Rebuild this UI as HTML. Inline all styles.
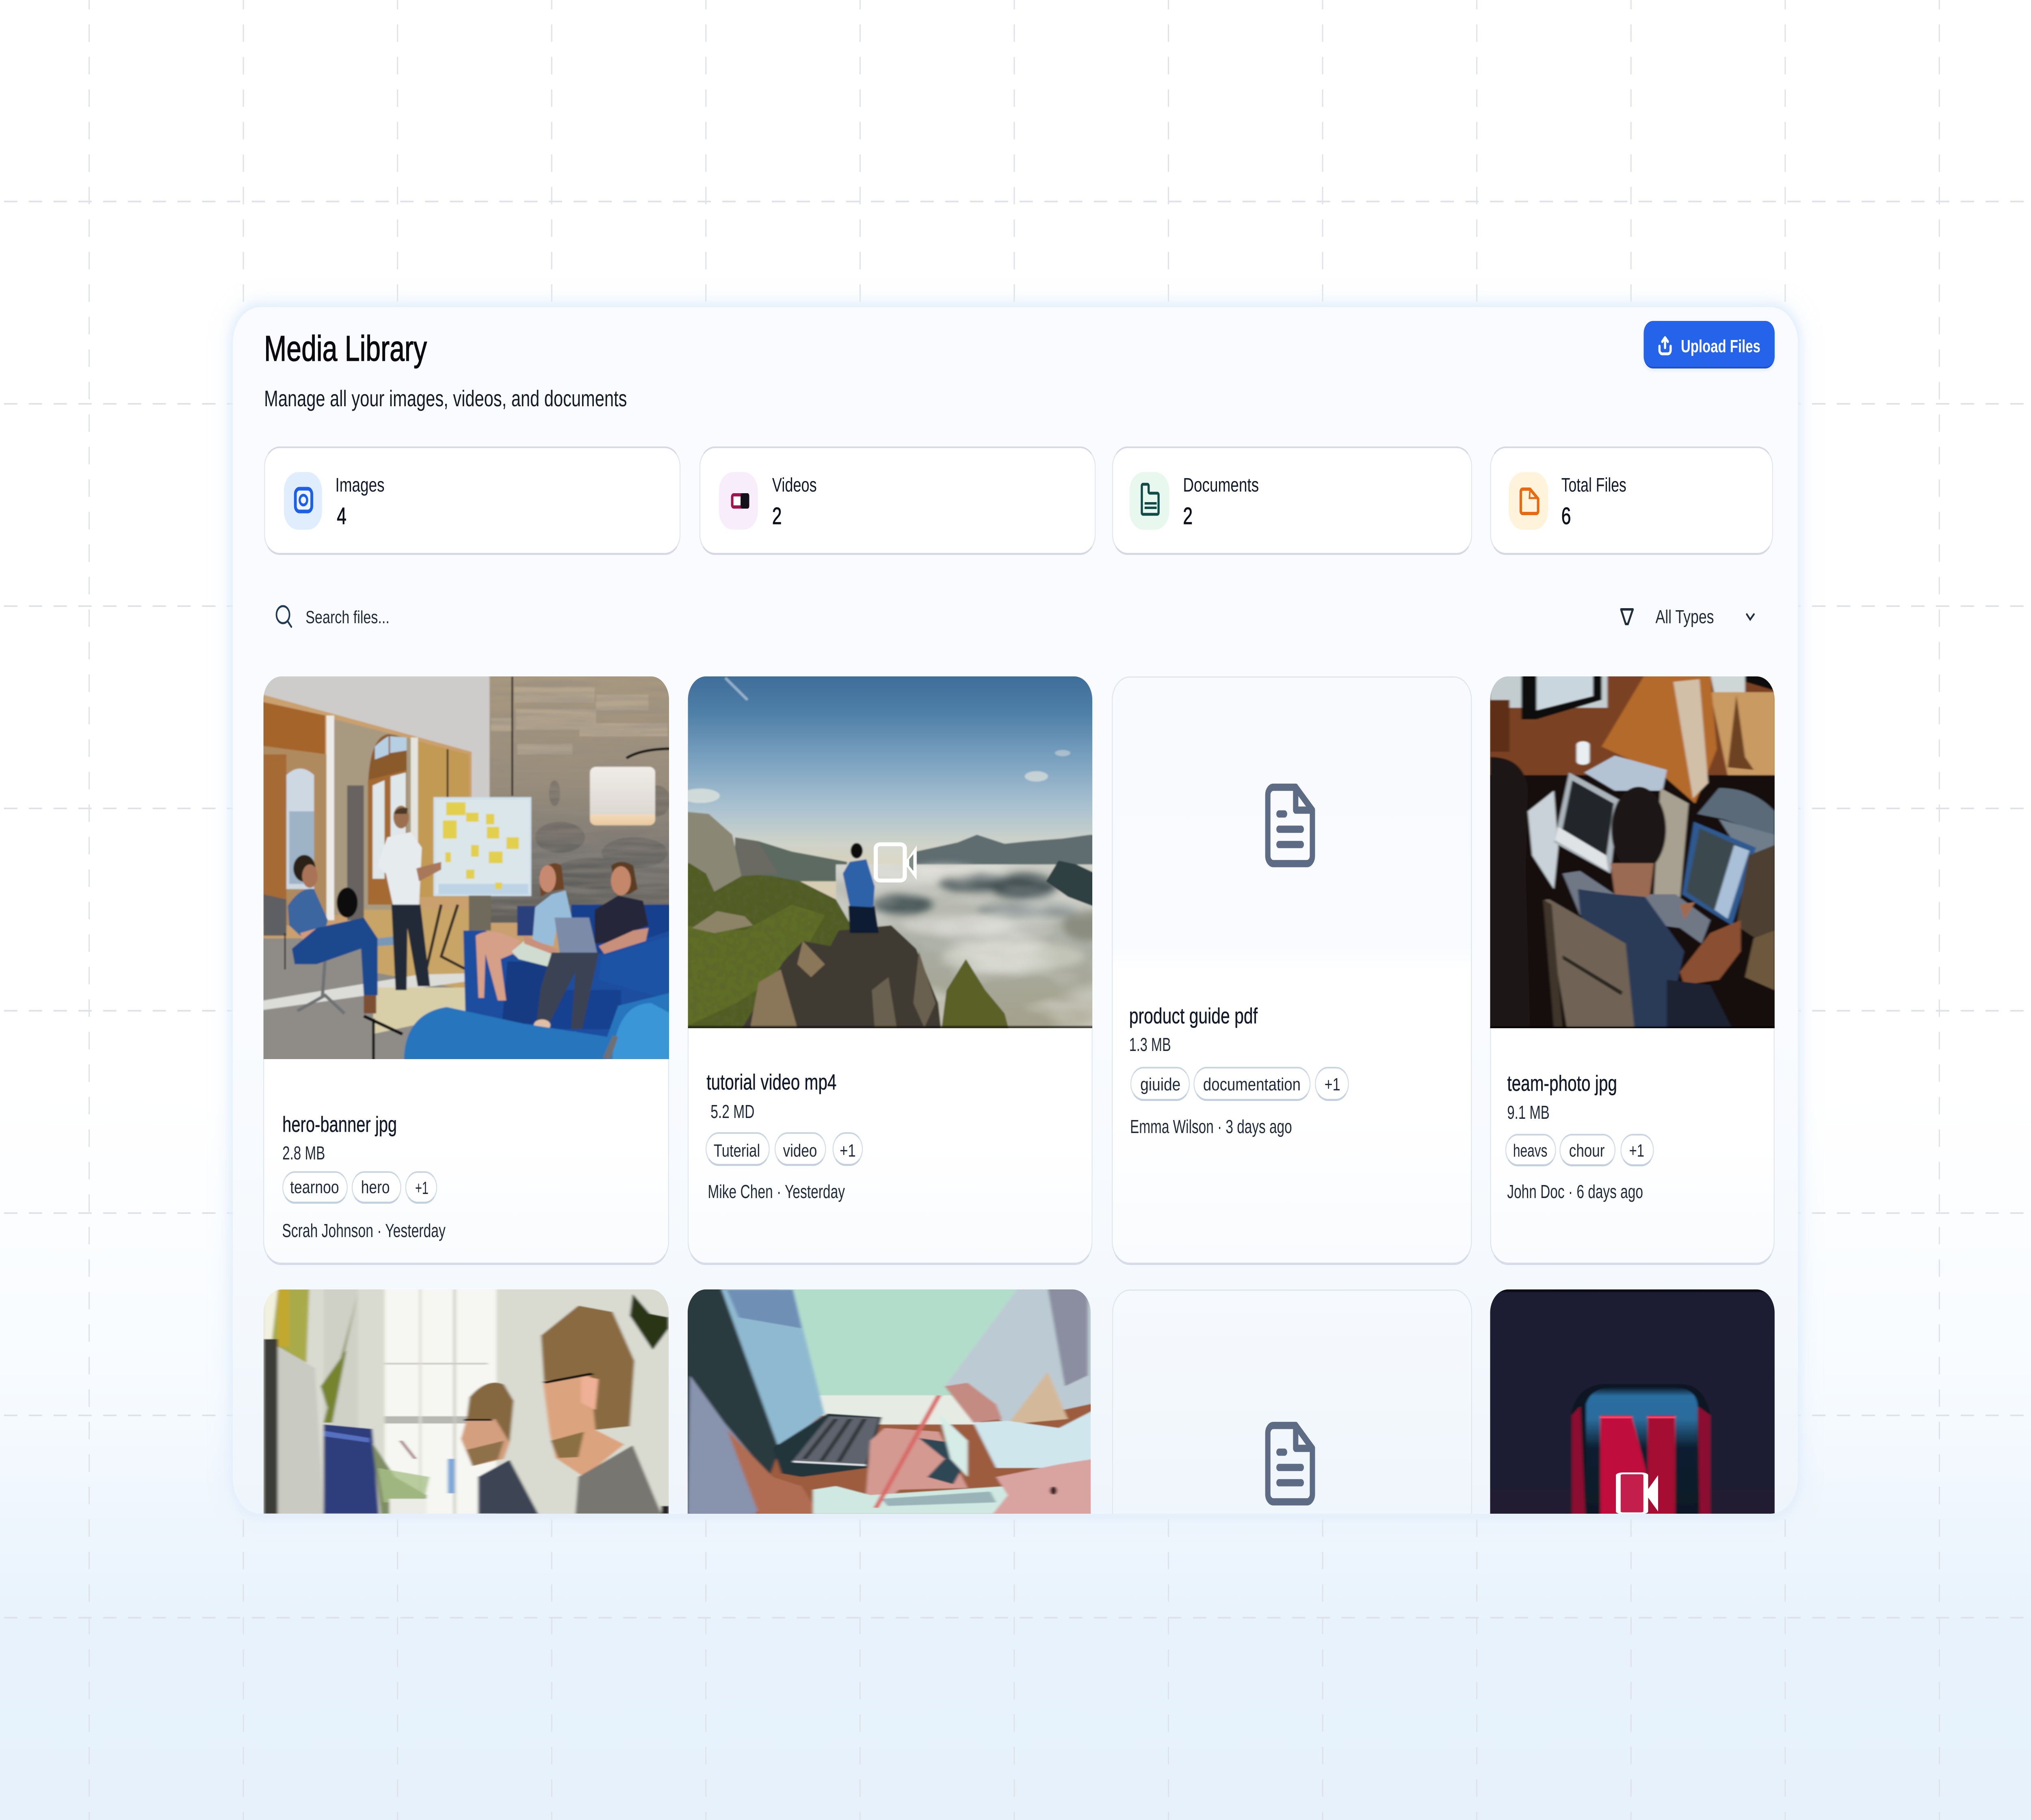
<!DOCTYPE html>
<html lang="en">
<head>
<meta charset="utf-8">
<title>Media Library</title>
<style>
html,body{margin:0;padding:0;width:100%;height:100%;overflow:hidden;background:#fff}
#stage{position:absolute;left:0;top:0;width:6560px;height:4480px;overflow:hidden;transform-origin:0 0;background:linear-gradient(180deg,#fff 0,#fff 60%,#f7fbff 76%,#edf5fd 85%,#e7f2fc 90%,#e6f1fb 100%);font-family:"Liberation Sans",sans-serif}
#grid{position:absolute;left:0;top:0}
#panel{position:absolute;left:752px;top:756px;width:5055px;height:2970px;border-radius:88px;overflow:hidden;background:linear-gradient(180deg,#f9fbfe 0,#f9fbfe 60%,#f5f9fd 80%,#eff5fc 100%)}
#glow{position:absolute;left:752px;top:756px;width:5055px;height:2970px;border-radius:88px;box-shadow:0 0 16px 8px rgba(226,239,252,.85),0 0 46px 22px rgba(225,238,251,.5)}
#wrap{position:absolute;left:-752px;top:-756px;width:6560px;height:4480px}
.stat{position:absolute;top:1099px;height:267px;box-sizing:border-box;background:#fff;border:3px solid #e3e6ef;border-top:4px solid #d5d8e5;border-bottom:5px solid #d5d8e5;border-radius:50px}
.ib{position:absolute;top:1162px;height:142px;border-radius:46px}
.card{position:absolute;box-sizing:border-box;border:3px solid #e0e6ee;border-bottom:6px solid #d6dde8;border-radius:58px;background:linear-gradient(180deg,#fff 0,#fff 80%,#f9fbfe 100%)}
.pill{position:absolute;box-sizing:border-box;background:#fff;border:3px solid #d3dde9;border-top:4px solid #c9d5e3;border-bottom:5px solid #c3d0e0;border-radius:42px}
#btn{position:absolute;left:5309px;top:790px;width:423px;height:117px;border-radius:30px;background:#2563eb;border-bottom:4px solid #1d4fd0;box-sizing:border-box;box-shadow:0 6px 8px rgba(37,99,235,.08)}
#art{position:absolute;left:0;top:0}
text{font-family:"Liberation Sans",sans-serif;fill:#111827}
.n{font-size:54px;fill:#111827;stroke:#111827;stroke-width:.5px}
.s{font-size:46px;fill:#1f2937}
.t{font-size:44px;fill:#1f2937}
.m{font-size:46px;fill:#1f2937}
.l{font-size:48px;fill:#111827}
.d{font-size:58px;fill:#0b0f19;stroke:#0b0f19;stroke-width:1px}
</style>
</head>
<body>
<div id="stage">
<svg id="grid" width="6560" height="4480" viewBox="0 0 6560 4480">
<g stroke="#dfe3e9" stroke-width="4" fill="none">
<path stroke-dasharray="43 37" stroke-dashoffset="20" d="M288 0V4480M786 0V4480M1284 0V4480M1782 0V4480M2280 0V4480M2778 0V4480M3276 0V4480M3774 0V4480M4272 0V4480M4770 0V4480M5268 0V4480M5766 0V4480M6264 0V4480"/>
<path stroke-dasharray="43 37" d="M13 496H6556M13 994H6556M13 1492H6556M13 1990H6556M13 2488H6556M13 2986H6556M13 3484H6556M13 3982H6556"/>
</g>
</svg>
<div id="glow"></div>
<div id="panel"><div id="wrap">
<div class="stat" style="left:853px;width:1345px"></div>
<div class="stat" style="left:2259px;width:1280px"></div>
<div class="stat" style="left:3592px;width:1163px"></div>
<div class="stat" style="left:4813px;width:914px"></div>
<div class="ib" style="left:917px;width:123px;background:#dfedfd"></div>
<div class="ib" style="left:2322px;width:126px;background:#f8eefb"></div>
<div class="ib" style="left:3648px;width:129px;background:#e8f8ef"></div>
<div class="ib" style="left:4873px;width:127px;background:#fff3dc"></div>
<div id="btn"></div>

<div class="card" style="left:850px;top:1665px;width:1311px;height:1449px"></div>
<div class="card" style="left:2221px;top:1665px;width:1308px;height:1449px"></div>
<div class="card" style="left:3591px;top:1665px;width:1163px;height:1449px;background:linear-gradient(180deg,#f8fafe 0,#f9fbfe 46%,#fff 50%,#fff 75%,#f9fbfe 100%)"></div>
<div class="card" style="left:4813px;top:1665px;width:919px;height:1449px"></div>
<div class="card" style="left:3592px;top:3174px;width:1163px;height:552px;border-bottom:0;border-radius:58px 58px 0 0;background:linear-gradient(180deg,#f6f9fd,#eff6fc)"></div>

<div class="pill" style="left:912px;top:2883px;width:211px;height:80px"></div>
<div class="pill" style="left:1136px;top:2883px;width:160px;height:80px"></div>
<div class="pill" style="left:1309px;top:2883px;width:103px;height:80px"></div>
<div class="pill" style="left:2279px;top:2787px;width:207px;height:83px"></div>
<div class="pill" style="left:2502px;top:2787px;width:166px;height:83px"></div>
<div class="pill" style="left:2689px;top:2787px;width:98px;height:83px"></div>
<div class="pill" style="left:3651px;top:2626px;width:192px;height:84px"></div>
<div class="pill" style="left:3855px;top:2626px;width:378px;height:84px"></div>
<div class="pill" style="left:4247px;top:2626px;width:110px;height:84px"></div>
<div class="pill" style="left:4862px;top:2791px;width:164px;height:80px"></div>
<div class="pill" style="left:5037px;top:2791px;width:181px;height:80px"></div>
<div class="pill" style="left:5234px;top:2791px;width:108px;height:80px"></div>

<svg id="art" width="6560" height="4480" viewBox="0 0 6560 4480">
<defs>
<filter id="b" x="-5%" y="-5%" width="110%" height="110%"><feGaussianBlur stdDeviation="2.6"/></filter>
<filter id="b2" x="-30%" y="-30%" width="160%" height="160%"><feGaussianBlur stdDeviation="14"/></filter>
<filter id="tex" x="0" y="0" width="100%" height="100%"><feTurbulence type="fractalNoise" baseFrequency=".004 .05" numOctaves="3" seed="4"/><feColorMatrix values="0 0 0 0 .3  0 0 0 0 .26  0 0 0 0 .22  1.8 0 0 0 -.6"/></filter>
<filter id="cld" x="0" y="0" width="100%" height="100%"><feTurbulence type="fractalNoise" baseFrequency=".003 .007" numOctaves="3" seed="9"/><feColorMatrix values="0 0 0 0 .9  0 0 0 0 .9  0 0 0 0 .87  2.4 0 0 0 -.9"/></filter>
<filter id="veg" x="0" y="0" width="100%" height="100%"><feTurbulence type="fractalNoise" baseFrequency=".05 .04" numOctaves="2" seed="3"/><feColorMatrix values="0 0 0 0 .1  0 0 0 0 .12  0 0 0 0 .03  2.6 0 0 0 -1"/></filter>
<clipPath id="c1"><path d="M851 2607V1723a58 58 0 0 1 58-58H2103a58 58 0 0 1 58 58V2607Z"/></clipPath>
<clipPath id="c2"><path d="M2222 2531V1723a58 58 0 0 1 58-58H3470a58 58 0 0 1 58 58V2531Z"/></clipPath>
<clipPath id="c4"><path d="M4813 2531V1723a58 58 0 0 1 58-58H5674a58 58 0 0 1 58 58V2531Z"/></clipPath>
<clipPath id="c5"><path d="M851 3800V3232a58 58 0 0 1 58-58H2102a58 58 0 0 1 58 58V3800Z"/></clipPath>
<clipPath id="c6"><path d="M2221 3800V3232a58 58 0 0 1 58-58H3465a58 58 0 0 1 58 58V3800Z"/></clipPath>
<clipPath id="c8"><path d="M4813 3800V3232a58 58 0 0 1 58-58H5674a58 58 0 0 1 58 58V3800Z"/></clipPath>
<clipPath id="wallc"><rect x="875" y="40" width="650" height="950"/></clipPath>
<clipPath id="hillc"><path d="M0 1500V560L100 570 180 650 215 800 330 810 430 830 560 900 620 1010 540 1130 300 1500Z"/></clipPath>
<linearGradient id="sky" x1="0" y1="0" x2="0" y2="1"><stop offset="0" stop-color="#3d6c98"/><stop offset=".11" stop-color="#4f80a8"/><stop offset=".25" stop-color="#7fa5c2"/><stop offset=".37" stop-color="#abc2d0"/><stop offset=".47" stop-color="#cfd3c8"/><stop offset=".56" stop-color="#d9ceb4"/><stop offset="1" stop-color="#c9c8bc"/></linearGradient>
<linearGradient id="sea" x1="0" y1="0" x2="0" y2="1"><stop offset="0" stop-color="#c4c6bd"/><stop offset=".5" stop-color="#a9aca2"/><stop offset="1" stop-color="#a39f88"/></linearGradient>
<linearGradient id="stone" x1="0" y1="0" x2="0" y2="1"><stop offset="0" stop-color="#a89980"/><stop offset=".45" stop-color="#998d7b"/><stop offset=".75" stop-color="#767572"/><stop offset="1" stop-color="#5f5d58"/></linearGradient>
<linearGradient id="lamp" x1="0" y1="0" x2="0" y2="1"><stop offset="0" stop-color="#efebe6"/><stop offset=".8" stop-color="#dcd8d2"/><stop offset=".82" stop-color="#f2d9b8"/><stop offset="1" stop-color="#e8c9a0"/></linearGradient>
<linearGradient id="blueTop" x1="0" y1="0" x2="0" y2="1"><stop offset="0" stop-color="#0b1a28"/><stop offset=".06" stop-color="#2b6da0"/><stop offset=".22" stop-color="#2c6c9c"/><stop offset=".42" stop-color="#0b1f30"/><stop offset="1" stop-color="#0a1722"/></linearGradient>
<linearGradient id="dark" x1="0" y1="0" x2="0" y2="1"><stop offset="0" stop-color="#1a1f30"/><stop offset=".7" stop-color="#1b1f30"/><stop offset="1" stop-color="#281f33"/></linearGradient>
</defs>

<!-- hero-banner image -->
<g clip-path="url(#c1)"><g transform="translate(800 1640) scale(.8929 .6378)"><g filter="url(#b)">
<rect x="0" y="0" width="1600" height="1600" fill="#c9a06e"/>
<path d="M0 0H885V900H810V330L57 110H0Z" fill="#cdccca"/>
<path d="M0 125 280 190V340L0 300Z" fill="#a5652a"/>
<path d="M0 300 285 340V1000H0Z" fill="#b08a5f"/>
<path d="M57 340H140V900H57Z" fill="#a66a35"/>
<path d="M140 420Q190 370 240 420V860H140Z" fill="#cdd8e2"/>
<path d="M150 560H240V840H150Z" fill="#9fb3c6"/>
<rect x="285" y="190" width="28" height="790" fill="#ecebe7"/>
<path d="M313 205 590 280V960H313Z" fill="#a89a80"/>
<path d="M360 460H420V980H360Z" fill="#676460"/>
<path d="M435 470Q440 270 510 262 575 270 575 300V480L450 450Z" fill="#8a5a2a"/>
<path d="M460 310Q490 280 510 270V340L460 360ZM515 270 575 275V325L515 335Z" fill="#b7cfe2"/>
<path d="M435 440 575 400V920H435Z" fill="#a56a30"/>
<path d="M452 460 495 440V820H452ZM517 425 572 410V660H517Z" fill="#dfe7ea"/>
<rect x="590" y="275" width="26" height="760" fill="#e5e4de"/>
<path d="M616 290 800 340V890H616Z" fill="#c39a52"/>
<path d="M720 320h6v200h-6z" fill="#222"/>
<path d="M57 880 140 900V1040H57Z" fill="#5d5f62"/>
<!-- stone wall -->
<rect x="875" y="30" width="660" height="960" fill="url(#stone)"/>
<g fill="#c2b49c" opacity=".55"><rect x="965" y="80" width="290" height="60"/><rect x="970" y="165" width="290" height="80"/><rect x="1260" y="110" width="190" height="60"/><rect x="880" y="200" width="80" height="50"/><rect x="975" y="300" width="200" height="40"/><rect x="1200" y="220" width="320" height="50"/></g>
<g fill="#4a4a4a" opacity=".35"><ellipse cx="1110" cy="490" rx="20" ry="50"/><ellipse cx="1400" cy="720" rx="120" ry="60"/><ellipse cx="1130" cy="660" rx="90" ry="60"/><ellipse cx="1480" cy="520" rx="50" ry="60"/><ellipse cx="1250" cy="800" rx="150" ry="60"/></g>
<g clip-path="url(#wallc)" opacity=".6"><rect x="875" y="40" width="650" height="950" filter="url(#tex)"/></g>
<rect x="954" y="40" width="6" height="460" fill="#111"/>
<path d="M1370 355Q1420 320 1530 318" stroke="#111" stroke-width="10" fill="none"/>
<rect x="1238" y="388" width="236" height="226" rx="22" fill="url(#lamp)"/>
<!-- whiteboard -->
<rect x="672" y="505" width="354" height="382" fill="#cfe0ea"/>
<rect x="680" y="515" width="338" height="362" fill="#dbe6ea"/>
<path d="M690 840H1015V880H690Z" fill="#bcd4e6"/>
<g fill="#e2cf4e"><rect x="718" y="525" width="70" height="50"/><rect x="790" y="565" width="45" height="35"/><rect x="862" y="570" width="30" height="40"/><rect x="706" y="595" width="50" height="70"/><rect x="865" y="620" width="45" height="45"/><rect x="808" y="690" width="28" height="45"/><rect x="872" y="715" width="50" height="45"/><rect x="936" y="660" width="45" height="45"/><rect x="715" y="718" width="20" height="38"/><rect x="790" y="785" width="30" height="35"/><rect x="895" y="835" width="25" height="25"/></g>
<!-- floor -->
<path d="M800 885H880V1020H800Z" fill="#6f6a5c"/>
<path d="M0 1050H800V1600H0Z" fill="#8f8c88"/>
<path d="M420 940H800V1250L450 1180Z" fill="#c8a566"/>
<path d="M0 1300 620 1190 800 1185V1215L0 1335Z" fill="#dcdcd8"/>
<path d="M460 1240H800V1340L450 1420Z" fill="#d8cfa8"/>
<path d="M700 920 640 1200M760 920 700 1120 790 1170" stroke="#302c28" stroke-width="10" fill="none"/>
<!-- left man -->
<path d="M280 1130 270 1280M180 1330 280 1270 350 1340" stroke="#6f7275" stroke-width="12" fill="none"/>
<ellipse cx="205" cy="780" rx="40" ry="52" fill="#2c2018"/>
<ellipse cx="225" cy="810" rx="28" ry="45" fill="#a97358"/>
<path d="M145 925Q190 850 240 860L290 980 270 1060 190 1040 150 1000Z" fill="#3a669f"/>
<path d="M190 1030 320 990 380 1040 290 1070 200 1060Z" fill="#d39a7c"/>
<ellipse cx="360" cy="912" rx="38" ry="58" fill="#0c0a0b"/>
<path d="M160 1090 250 1010 420 970 470 1050 470 1270H420L410 1090 250 1150H170Z" fill="#1e4a8d"/>
<path d="M420 1270H465V1340H420Z" fill="#7c4f33"/>
<path d="M420 1350 560 1420" stroke="#111" stroke-width="12"/>
<path d="M455 1360V1520" stroke="#111" stroke-width="10"/>
<path d="M135 1030V1170" stroke="#222" stroke-width="5"/>
<path d="M470 1050 550 1040V1075L470 1080Z" fill="#7998b8"/>
<!-- center man -->
<ellipse cx="555" cy="582" rx="28" ry="44" fill="#9c6f50"/>
<path d="M528 570Q540 540 580 548L575 570Z" fill="#4c3a26"/>
<path d="M505 660 590 640 630 700 620 920H525L500 800 470 770Z" fill="#e6ebee"/>
<path d="M610 780 700 755V785L620 830Z" fill="#a9785a"/>
<path d="M520 920H625L660 1235H615L578 1010 575 1250H535Z" fill="#202a38"/>
<!-- sofa -->
<path d="M780 1020H860L970 1120H1230L1530 950V1450H790Z" fill="#1b4d9e"/>
<path d="M1170 920H1530V1020L1270 1110H1170Z" fill="#16418e"/>
<path d="M975 925H1045V1040H975Z" fill="#2b3f7d"/>
<path d="M1530 1040 1280 1120 1270 1210 1530 1290Z" fill="#1c53a5"/>
<path d="M940 1140H1100L1050 1380H920Z" fill="#123a82"/>
<path d="M1100 1250H1350V1400H1080Z" fill="#124090"/>
<!-- woman -->
<path d="M825 1040Q880 1000 985 1060L960 1110 915 1130 935 1290H905L860 1110 855 1280H835Z" fill="#d59f88"/>
<path d="M955 1100 1000 1060 1100 1090 1090 1160 980 1130Z" fill="#cfdccf"/>
<path d="M1055 800Q1100 740 1135 770L1145 860 1090 870 1060 890Z" fill="#6d4426"/>
<ellipse cx="1085" cy="820" rx="30" ry="52" fill="#c78a6f"/>
<path d="M1040 930 1100 880 1150 865 1172 970 1120 990 1105 1080 1030 1060Z" fill="#97bddb"/>
<path d="M1000 1040 1100 1085 1125 1095 1100 1110 1000 1070Z" fill="#c9907a"/>
<!-- right man -->
<path d="M1315 770Q1350 740 1395 770L1410 860 1380 880 1330 880Z" fill="#5a3e22"/>
<ellipse cx="1350" cy="828" rx="36" ry="56" fill="#c4876a"/>
<path d="M1255 940 1340 885 1430 905 1450 1000 1400 1020 1390 1060 1255 1070Z" fill="#27283a"/>
<path d="M1395 1020 1450 1010 1440 1060 1290 1110 1270 1080Z" fill="#c8907a"/>
<path d="M1110 970H1235L1265 1110 1130 1120Z" fill="#7b8ba8"/>
<path d="M1100 1105H1270L1210 1400H1170L1185 1180 1095 1370H1045L1060 1240Z" fill="#3b4253"/>
<ellipse cx="1065" cy="1385" rx="30" ry="22" fill="#e0bfa4"/><ellipse cx="1178" cy="1430" rx="28" ry="20" fill="#e0bfa4"/>
<!-- foreground sofa -->
<path d="M565 1517Q570 1340 720 1315L1000 1380 1300 1430 1340 1310 1530 1260V1600H560Z" fill="#2675bd"/>
<path d="M1320 1500Q1340 1300 1460 1300L1530 1340V1600H1310Z" fill="#3a96d8"/>
<path d="M1285 1510 1320 1425 1340 1430 1310 1520Z" fill="#6d6f74"/>
</g></g></g>

<!-- tutorial video image -->
<g clip-path="url(#c2)"><g transform="translate(2200 1640) scale(.8929 .6378)"><g filter="url(#b)">
<rect x="0" y="30" width="1600" height="1400" fill="url(#sky)"/>
<path d="M160 45 240 130" stroke="#b6cbdd" stroke-width="10" opacity=".7"/>
<ellipse cx="1285" cy="425" rx="42" ry="20" fill="#dde1dd" opacity=".7"/><ellipse cx="1380" cy="335" rx="28" ry="12" fill="#dde1dd" opacity=".5"/>
<ellipse cx="70" cy="500" rx="70" ry="28" fill="#dce2dc" opacity=".8"/>
<path d="M850 715 1000 680 1070 650 1170 685 1260 675 1380 665 1480 650 1600 660V800H850Z" fill="#5f6d70"/>
<path d="M195 660 280 675 400 715 600 755V830H195Z" fill="#5c6a62"/>
<rect x="560" y="765" width="1000" height="660" fill="url(#sea)"/>
<g filter="url(#b2)">
<ellipse cx="800" cy="920" rx="110" ry="40" fill="#4d5b5c"/>
<ellipse cx="1060" cy="835" rx="130" ry="35" fill="#3a4a4c"/>
<ellipse cx="1240" cy="850" rx="120" ry="50" fill="#3a4a4c"/>
<ellipse cx="1250" cy="940" rx="180" ry="30" fill="#7a8484"/>
<ellipse cx="1470" cy="1000" rx="90" ry="60" fill="#8a8d80"/>
<ellipse cx="1000" cy="1000" rx="200" ry="40" fill="#cdcec6"/>
<ellipse cx="1200" cy="1120" rx="260" ry="60" fill="#c3c4b8"/>
<ellipse cx="950" cy="790" rx="110" ry="22" fill="#d6d6cd"/>
</g>
<rect x="560" y="765" width="1000" height="660" filter="url(#cld)" opacity=".45"/>
<path d="M1320 830 1365 750 1430 765 1500 800V930L1400 890Z" fill="#2f3f42"/>
<path d="M0 1500V560L100 570 180 650 215 800 330 810 430 830 560 900 620 1010 540 1130 300 1500Z" fill="#515c24"/>
<path d="M0 1000 230 1020 400 920 520 960 420 1150 200 1300 0 1400Z" fill="#5f6e26"/>
<g clip-path="url(#hillc)" opacity=".6"><rect x="0" y="760" width="640" height="640" filter="url(#veg)"/></g>
<path d="M0 560 100 570 185 650 218 810 120 870 90 800 30 760 0 760Z" fill="#8b8775"/>
<path d="M195 660 280 680 350 800 218 810Z" fill="#6b6b62"/>
<path d="M40 1010 130 945 230 965 260 1000 120 1030Z" fill="#8d8468"/>
<path d="M160 1500 370 1140 440 1060 540 1080 570 1020 760 1000 850 1090 930 1300 950 1500Z" fill="#3f3b33"/>
<path d="M250 1395 280 1220 360 1170 420 1395ZM440 1060 520 1150 470 1200 420 1150Z" fill="#8a7658"/>
<path d="M690 1250 750 1200 780 1395 700 1395ZM860 1100 920 1300 880 1395 840 1300Z" fill="#6a6150"/>
<path d="M930 1500 960 1250 1030 1130 1100 1250 1170 1340 1210 1500Z" fill="#5a6128"/>
<path d="M605 925H700L715 1030 610 1030Z" fill="#101a30"/>
<path d="M585 800 610 755 670 745 700 850 695 930 610 925Z" fill="#2f62a8"/>
<ellipse cx="635" cy="712" rx="22" ry="30" fill="#0e0c0c"/>
<rect x="0" y="1388" width="1600" height="10" fill="#1c1b16" opacity=".85"/>
</g></g></g>
<g transform="translate(2200 1640) scale(.8929 .6378)">
<rect x="704" y="687" width="105" height="140" rx="16" fill="#fff" fill-opacity=".16" stroke="#fff" stroke-width="15"/>
<path d="M818 745 852 692V825L818 775Z" fill="#fff"/><path d="M818 745V775" stroke="#fff" stroke-width="12"/>
<path d="M825 745 840 725V790L825 770Z" fill="#7d8c85"/>
</g>

<!-- team-photo image -->
<g clip-path="url(#c4)"><g transform="translate(3560 1640) scale(1.403 .6378)"><g filter="url(#b)">
<rect x="850" y="20" width="740" height="1420" fill="#16110d"/>
<rect x="850" y="20" width="740" height="400" fill="#7a4322"/>
<rect x="893" y="30" width="270" height="130" fill="#c3cdd0"/>
<path d="M965 30H1150V130L1000 205 965 205Z" fill="#0e0e10"/>
<path d="M1000 30H1130V115L1000 170Z" fill="#cad6dd"/>
<rect x="893" y="130" width="45" height="200" fill="#5e2f14"/>
<path d="M1480 30H1550V95L1480 60Z" fill="#0d0d0f"/>
<path d="M1400 30H1480V110L1410 110Z" fill="#cfd6d6"/>
<path d="M1400 100H1550V420H1440Z" fill="#c99a62"/>
<path d="M1150 310 1250 30H1400L1415 320 1365 530 1290 420Z" fill="#b36a2c"/>
<path d="M1315 60 1375 50 1395 450 1360 510Z" fill="#d2bfa8"/>
<path d="M1460 110 1480 350 1500 400 1440 390Z" fill="#6d4324"/>
<path d="M1110 410 1180 345 1300 400 1290 480 1180 480Z" fill="#b4c3d4"/>
<rect x="1092" y="290" width="30" height="90" rx="14" fill="#e9eef2"/>
<path d="M893 350Q970 350 980 470L975 780 985 1397H893Z" fill="#1c1815"/>
<path d="M980 560 1040 480 1050 700 1040 860 990 730Z" fill="#c9d2d8"/>
<path d="M1075 410 1190 515 1170 800 1040 680Z" fill="#aab4ba"/>
<path d="M1082 440 1178 530 1160 740 1058 640Z" fill="#24272b"/>
<path d="M1050 620 1160 730 1165 790 1042 670Z" fill="#dfe3e6"/>
<path d="M1285 470 1350 530 1330 900 1270 880Z" fill="#a8a090"/>
<path d="M1420 470Q1500 470 1548 560V660L1430 590 1370 570Z" fill="#5a6a78"/>
<path d="M1420 590 1548 650V840L1500 800Z" fill="#707e8c"/>
<path d="M1362 600 1505 700 1450 1000 1335 880Z" fill="#2f5a90"/>
<path d="M1375 625 1490 712 1440 975 1345 870Z" fill="#3a4950"/>
<path d="M1455 690 1490 712 1440 975 1410 940Z" fill="#a9c0d8"/>
<path d="M1488 730 1548 690V1100L1460 1000Z" fill="#4d3f30"/>
<path d="M1500 1050 1548 1020V1250L1480 1200Z" fill="#6e583e"/>
<path d="M1060 800 1100 790 1180 880H1320L1400 980 1380 1070 1330 1010 1100 960Z" fill="#6f7886"/>
<ellipse cx="1235" cy="630" rx="63" ry="165" fill="#1e1916"/>
<path d="M1170 760H1270L1260 890 1180 880Z" fill="#9a6a52"/>
<path d="M1095 860 1180 880 1250 890 1340 1100 1300 1397H1180L1100 950Z" fill="#2b3a58"/>
<path d="M1030 900 1205 1070 1225 1397H1070L1020 900Z" fill="#6f6455"/>
<path d="M1060 1130 1195 1270 1198 1255 1060 1115Z" fill="#2a2520"/>
<path d="M1035 920 1060 1397H1040L1015 900Z" fill="#40342a"/>
<path d="M1330 1180 1400 1030 1470 980 1470 1100 1420 1210 1340 1230Z" fill="#8a4f32"/>
<path d="M1330 920 1365 910 1340 980Z" fill="#a06b50"/>
<path d="M1300 1210 1400 1230 1450 1397H1300Z" fill="#1d2433"/>
<rect x="850" y="1390" width="740" height="8" fill="#000"/>
</g></g></g>

<!-- row 2 photo 1 -->
<g clip-path="url(#c5)"><g transform="translate(740 3100) scale(1.849 .4464)"><g filter="url(#b)">
<rect x="40" y="140" width="750" height="1400" fill="#d9dbd0"/>
<rect x="272" y="150" width="195" height="1400" fill="#f6f7f2"/>
<rect x="272" y="570" width="180" height="10" fill="#cfcfc8"/><rect x="272" y="865" width="180" height="40" fill="#b7b8b2"/>
<rect x="332" y="150" width="4" height="1300" fill="#dddcd4"/><rect x="392" y="150" width="4" height="1300" fill="#c9c9c0"/>
<rect x="165" y="150" width="60" height="800" fill="#cfd0c6"/>
<path d="M60 165H140L135 570 85 480H60Z" fill="#a9aa48"/>
<path d="M85 165H105V480H85Z" fill="#c2a92e"/><path d="M60 165H85L75 440H60Z" fill="#f2f1df"/>
<path d="M60 440H85V1403H60Z" fill="#3b3a37"/>
<path d="M85 480 150 600 165 1403H85Z" fill="#c9cac2"/>
<path d="M165 900 225 190 195 600 180 900ZM160 700 205 500 180 900Z" fill="#76842f"/>
<path d="M165 910 250 935 262 1403H165Z" fill="#2e3e7c"/>
<path d="M165 945 245 985V1010L165 975Z" fill="#5670c0"/>
<path d="M250 1010 290 1200 345 1300 340 1403H265Z" fill="#7f8e64"/>
<path d="M260 1150 350 1200 340 1340H270Z" fill="#a9c088" opacity=".8"/>
<rect x="280" y="1320" width="65" height="83" fill="#ecece6"/>
<path d="M300 1000 325 1100" stroke="#8a4a55" stroke-width="5"/>
<path d="M388 1100V1290" stroke="#7da8d8" stroke-width="12"/>
<path d="M705 190 735 300 768 320V380L740 500 700 310Z" fill="#2b3419"/>
<path d="M420 760Q450 650 480 690L497 780 490 1010 460 900 415 880Z" fill="#86683f"/>
<path d="M415 880H465L490 1010 480 1100 425 1140 405 990Z" fill="#d39f7e"/>
<path d="M415 1050 480 1000 470 1100 425 1140Z" fill="#8e7149"/>
<path d="M410 885 460 885" stroke="#18171a" stroke-width="10"/>
<path d="M435 1200 490 1105 540 1403H435Z" fill="#3c4454"/>
<path d="M545 420 610 255 670 290 708 560 700 920 640 940 630 640 550 670Z" fill="#8a6a40"/>
<path d="M548 670 630 640 640 940 690 1020 620 1200 570 1095 560 960Z" fill="#dba47f"/>
<path d="M615 640 645 660 640 830 615 790Z" fill="#eeb096"/>
<path d="M562 1000 620 950 610 1090 575 1095Z" fill="#8a6f43"/>
<path d="M550 680 635 630" stroke="#111" stroke-width="12"/>
<path d="M610 1200 705 1025 755 1403H605Z" fill="#787670"/>
<rect x="755" y="1360" width="15" height="43" fill="#222"/>
</g></g></g>

<!-- row 2 photo 2 -->
<g clip-path="url(#c6)"><g transform="translate(740 3100) scale(1.849 .4464)"><g filter="url(#b)">
<rect x="780" y="140" width="750" height="1400" fill="#9c5c3c"/>
<rect x="960" y="150" width="440" height="620" fill="#b3ddcb"/>
<path d="M1030 750H1310V910H1040Z" fill="#e6ece4"/>
<path d="M780 150H870L985 900 960 1060 920 1403H780Z" fill="#2a3a3f"/>
<path d="M860 165H985L1040 850 960 1040Z" fill="#8fb9d0"/>
<path d="M870 170H985L1000 380 890 320Z" fill="#6f8fb5"/>
<path d="M805 640 865 900 945 1200 920 1403H801Z" fill="#8893ad"/>
<path d="M870 940 950 1200 1000 1250 1030 1403H925Z" fill="#b06d52"/>
<path d="M950 1040 1045 850 1140 870 1115 1150 1000 1200 965 1180Z" fill="#24343a"/>
<path d="M1048 865 1135 875 1112 1130 985 1110Z" fill="#5f646d"/>
<path d="M1060 880 1005 1100M1085 880 1035 1110M1110 880 1065 1115" stroke="#2e3238" stroke-width="8"/>
<path d="M985 1110 1112 1130V1140L985 1120Z" fill="#dfe3e6"/>
<path d="M950 1200 1320 1190 1310 1270 1020 1260Z" fill="#9c5c3c"/>
<path d="M1120 1000 1145 930 1240 950 1290 1260 1170 1270 1130 1400H1110Z" fill="#d49a92"/>
<path d="M1205 985 1260 1010 1290 1100 1265 1240 1220 1200 1250 1100Z" fill="#2f4654"/>
<path d="M1240 850 1290 1000 1290 1200 1260 1100Z" fill="#d5ece7"/>
<path d="M1380 150H1530V780L1355 900 1250 700Z" fill="#bccbd3"/>
<path d="M1250 700 1290 680 1340 800 1350 880 1300 900Z" fill="#c48b82"/>
<path d="M1430 620 1465 880 1360 910Z" fill="#d3b99a"/>
<path d="M1430 160 1500 160 1500 640 1460 700Z" fill="#8b8ea0"/>
<path d="M1300 900 1360 890 1450 930 1530 800V1200L1420 1150 1340 1150Z" fill="#cfe6ec"/>
<path d="M1020 1270 1060 1250 1120 1300 1360 1250 1380 1403H1020Z" fill="#cfe9e2"/>
<path d="M1140 1320 1330 1280 1340 1340 1150 1360Z" fill="#9ab3b8"/>
<path d="M1340 1200 1450 1130 1530 1090V1420H1330L1360 1300Z" fill="#d9a3a0"/>
<ellipse cx="1440" cy="1275" rx="6" ry="22" fill="#3a2024"/>
<path d="M1240 750 1130 1370" stroke="#d86a68" stroke-width="9"/>
</g></g></g>

<!-- row 2 photo 4 -->
<g clip-path="url(#c8)"><g transform="translate(3500 3100) scale(1.531 .4464)"><g filter="url(#b)">
<rect x="840" y="140" width="640" height="1400" fill="url(#dark)"/>
<rect x="840" y="150" width="640" height="30" fill="#090c14"/>
<path d="M1028 1500V860Q1040 690 1100 688H1260Q1310 690 1322 860V1500Z" fill="#0a1722"/>
<path d="M1030 1500V860L1048 810 1060 1500ZM1322 1500V860L1296 810 1300 1500Z" fill="#8c1030"/>
<path d="M1060 1500V800Q1070 710 1110 705H1250Q1290 710 1295 800V1500Z" fill="url(#blueTop)"/>
<path d="M1090 860H1156L1186 1160 1190 1500H1090Z" fill="#bf0f3c"/>
<path d="M1190 860H1248V1500H1190Z" fill="#a60d30"/>
<path d="M1090 865H1156V876H1090ZM1190 865H1248V876H1190Z" fill="#f5486f"/>
</g></g></g>
<g transform="translate(3500 3100) scale(1.531 .4464)">
<rect x="1128" y="1180" width="58" height="220" rx="10" fill="#fff" fill-opacity=".08" stroke="#fff" stroke-width="10"/>
<path d="M1190 1270 1212 1190V1390L1190 1310Z" fill="#fff"/>
</g>

<!-- doc icons -->
<g transform="translate(4059 1919) scale(9 9.4)" fill="none" stroke="#5d6c84" stroke-width="1.9" stroke-linecap="round" stroke-linejoin="round">
<path d="M14 2H6a2 2 0 0 0-2 2v16a2 2 0 0 0 2 2h12a2 2 0 0 0 2-2V8z"/><path d="M14 2v6h6"/><path d="M16 13H8M16 17H8M10 9H8"/>
</g>
<g transform="translate(4059 3490) scale(9 9.4)" fill="none" stroke="#5d6c84" stroke-width="1.9" stroke-linecap="round" stroke-linejoin="round">
<path d="M14 2H6a2 2 0 0 0-2 2v16a2 2 0 0 0 2 2h12a2 2 0 0 0 2-2V8z"/><path d="M14 2v6h6"/><path d="M16 13H8M16 17H8M10 9H8"/>
</g>

<!-- stat icons -->
<rect x="954" y="1203" width="53" height="56" rx="13" fill="#eef5fe" stroke="#1d5fe8" stroke-width="9"/>
<circle cx="980" cy="1231" r="12" fill="none" stroke="#1d5fe8" stroke-width="7"/>
<rect x="2365" y="1218" width="50" height="30" rx="5" fill="#fff" stroke="#a0144f" stroke-width="8"/>
<rect x="2392" y="1214" width="28" height="38" rx="6" fill="#14101a"/>
<path d="M3688 1196a4 4 0 0 1 4-4h14a4 4 0 0 1 4 4v14a4 4 0 0 0 4 4h24a4 4 0 0 1 4 4v44a4 4 0 0 1-4 4h-46a4 4 0 0 1-4-4Z" fill="none" stroke="#124a49" stroke-width="7"/>
<path d="M3697 1239h39M3697 1250h39" stroke="#124a49" stroke-width="6"/>
<path d="M4912 1210a6 6 0 0 1 6-6h24l26 24v30a6 6 0 0 1-6 6h-44a6 6 0 0 1-6-6Z" fill="none" stroke="#e8690f" stroke-width="8" stroke-linejoin="round"/>
<path d="M4942 1204l-2 22h28" fill="none" stroke="#e8690f" stroke-width="5"/>

<!-- search + filter -->
<circle cx="914" cy="1513" r="21" fill="none" stroke="#1f3a52" stroke-width="5"/><path d="M929 1529 941 1543" stroke="#1f3a52" stroke-width="5" stroke-linecap="round"/>
<path d="M5236 1500H5274L5258 1536H5251Z" fill="none" stroke="#1f2d3d" stroke-width="6" stroke-linejoin="round"/>
<path d="M5642 1512 5653 1525 5665 1512" fill="none" stroke="#1f2d3d" stroke-width="5" stroke-linecap="round"/>

<!-- upload icon -->
<g fill="none" stroke="#fff" stroke-width="7" stroke-linecap="round" stroke-linejoin="round">
<path d="M5378 831V856M5369 841 5378 831 5387 841"/>
<path d="M5360 852V862a9 9 0 0 0 9 9H5387a9 9 0 0 0 9-9V852"/>
</g>

<!-- header text -->
<text x="853" y="888" font-size="88" textLength="526" lengthAdjust="spacingAndGlyphs" style="fill:#0a0a0f;stroke:#0a0a0f;stroke-width:1.4px">Media Library</text>
<text x="853" y="1000" font-size="56" textLength="1172" lengthAdjust="spacingAndGlyphs" style="fill:#151b26">Manage all your images, videos, and documents</text>
<text x="5429" y="867" font-size="44" font-weight="700" textLength="257" lengthAdjust="spacingAndGlyphs" style="fill:#fff">Upload Files</text>

<!-- stats -->
<text class="l" x="1083" y="1210" textLength="159" lengthAdjust="spacingAndGlyphs">Images</text>
<text class="d" x="1088" y="1290" textLength="31" lengthAdjust="spacingAndGlyphs">4</text>
<text class="l" x="2494" y="1210" textLength="144" lengthAdjust="spacingAndGlyphs">Videos</text>
<text class="d" x="2494" y="1290" textLength="31" lengthAdjust="spacingAndGlyphs">2</text>
<text class="l" x="3821" y="1210" textLength="245" lengthAdjust="spacingAndGlyphs">Documents</text>
<text class="d" x="3821" y="1290" textLength="31" lengthAdjust="spacingAndGlyphs">2</text>
<text class="l" x="5043" y="1210" textLength="210" lengthAdjust="spacingAndGlyphs">Total Files</text>
<text class="d" x="5043" y="1290" textLength="31" lengthAdjust="spacingAndGlyphs">6</text>

<!-- toolbar -->
<text x="987" y="1534" font-size="44" textLength="271" lengthAdjust="spacingAndGlyphs" style="fill:#1f2937">Search files...</text>
<text x="5347" y="1534" font-size="46" textLength="189" lengthAdjust="spacingAndGlyphs" style="fill:#1f2937">All Types</text>

<!-- card 1 -->
<text class="n" x="912" y="2786" textLength="370" lengthAdjust="spacingAndGlyphs">hero-banner jpg</text>
<text class="s" x="912" y="2854" textLength="138" lengthAdjust="spacingAndGlyphs">2.8 MB</text>
<text class="t" x="937" y="2937" textLength="158" lengthAdjust="spacingAndGlyphs">tearnoo</text>
<text class="t" x="1166" y="2937" textLength="93" lengthAdjust="spacingAndGlyphs">hero</text>
<text class="t" x="1341" y="2939" textLength="43" lengthAdjust="spacingAndGlyphs">+1</text>
<text class="m" x="911" y="3045" textLength="528" lengthAdjust="spacingAndGlyphs">Scrah Johnson · Yesterday</text>

<!-- card 2 -->
<text class="n" x="2282" y="2682" textLength="420" lengthAdjust="spacingAndGlyphs">tutorial video mp4</text>
<text class="s" x="2295" y="2752" textLength="142" lengthAdjust="spacingAndGlyphs">5.2 MD</text>
<text class="t" x="2305" y="2847" textLength="150" lengthAdjust="spacingAndGlyphs">Tuterial</text>
<text class="t" x="2529" y="2847" textLength="110" lengthAdjust="spacingAndGlyphs">video</text>
<text class="t" x="2712" y="2847" textLength="52" lengthAdjust="spacingAndGlyphs">+1</text>
<text class="m" x="2286" y="2949" textLength="443" lengthAdjust="spacingAndGlyphs">Mike Chen · Yesterday</text>

<!-- card 3 -->
<text class="n" x="3647" y="2519" textLength="415" lengthAdjust="spacingAndGlyphs">product guide pdf</text>
<text class="s" x="3647" y="2587" textLength="135" lengthAdjust="spacingAndGlyphs">1.3 MB</text>
<text class="t" x="3683" y="2684" textLength="130" lengthAdjust="spacingAndGlyphs">giuide</text>
<text class="t" x="3886" y="2684" textLength="315" lengthAdjust="spacingAndGlyphs">documentation</text>
<text class="t" x="4278" y="2684" textLength="51" lengthAdjust="spacingAndGlyphs">+1</text>
<text class="m" x="3650" y="2789" textLength="523" lengthAdjust="spacingAndGlyphs">Emma Wilson · 3 days ago</text>

<!-- card 4 -->
<text class="n" x="4868" y="2685" textLength="355" lengthAdjust="spacingAndGlyphs">team-photo jpg</text>
<text class="s" x="4868" y="2754" textLength="137" lengthAdjust="spacingAndGlyphs">9.1 MB</text>
<text class="t" x="4887" y="2847" textLength="111" lengthAdjust="spacingAndGlyphs">heavs</text>
<text class="t" x="5068" y="2847" textLength="115" lengthAdjust="spacingAndGlyphs">chour</text>
<text class="t" x="5262" y="2847" textLength="49" lengthAdjust="spacingAndGlyphs">+1</text>
<text class="m" x="4868" y="2949" textLength="439" lengthAdjust="spacingAndGlyphs">John Doc · 6 days ago</text>
</svg>
</div></div>
</div>
<script>
(function(){
  var s=document.getElementById('stage');
  function fit(){
    var w=window.innerWidth,h=window.innerHeight;
    if(w&&h&&(w!==6560||h!==4480)){s.style.transform='scale('+(w/6560)+','+(h/4480)+')';}
    else{s.style.transform='none';}
  }
  fit();window.addEventListener('resize',fit);
})();
</script>
</body>
</html>
